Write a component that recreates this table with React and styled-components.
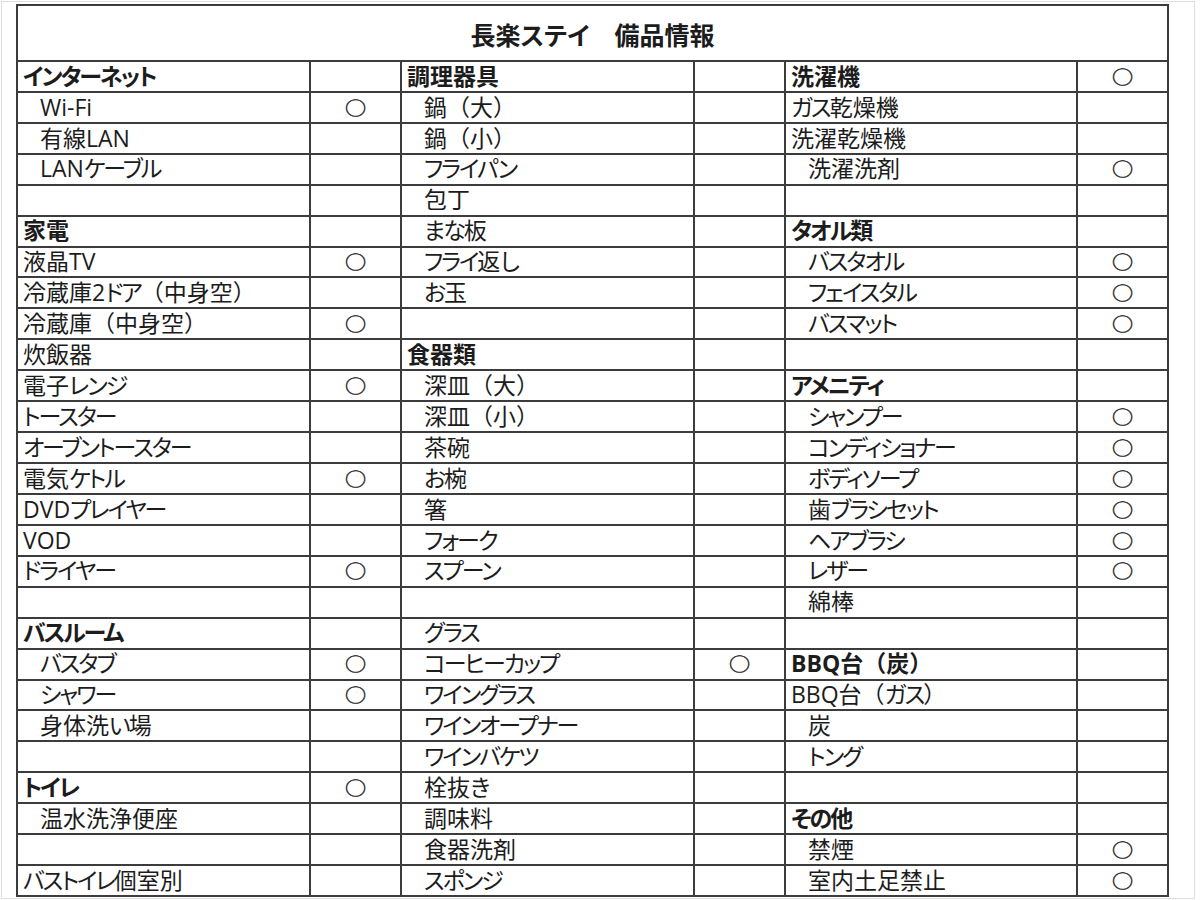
import React from 'react'
import styled, { createGlobalStyle } from 'styled-components'

const GlobalStyle = createGlobalStyle`
  html, body {
    margin: 0;
    padding: 0;
    background: #ffffff;
  }
  body {
    font-family: "Open Sans", "Noto Sans CJK JP", sans-serif;
    color: #1c1c1c;
  }
`

const Frame = styled.div`
  box-sizing: border-box;
  width: 1194px;
  height: 898px;
  margin: 1px 0 0 1px;
  border: 1px solid #dedede;
  padding: 2px 0 0 14px;
`

const Sheet = styled.div`
  display: grid;
  grid-template-columns: 291px 89px 291px 89px 290px 89px;
  grid-template-rows: 54px repeat(27, 1fr);
  gap: 2px;
  padding: 2px;
  width: 1153px;
  height: 893px;
  box-sizing: border-box;
  background: #3c3c3c;
`

const Title = styled.div`
  grid-column: 1 / -1;
  background: #fff;
  display: flex;
  align-items: center;
  justify-content: center;
  font-size: 25px;
  font-weight: 700;
  padding-top: 2px;
`

const Cell = styled.div`
  background: #fff;
  display: flex;
  align-items: center;
  min-width: 0;
  padding-left: ${p => (p.$indent ? '22px' : '5px')};
  font-size: 23px;
  font-weight: ${p => (p.$bold ? 700 : 400)};
  white-space: nowrap;
  line-height: 1.2;
`

// kana in the sheet font are narrow, so use proportional widths
const Kana = styled.span`
  font-feature-settings: "palt";
  letter-spacing: ${p => (p.$title ? '0' : '-2px')};
`

const Mark = styled.div`
  background: #fff;
  display: flex;
  align-items: center;
  justify-content: center;
  font-family: "Noto Sans CJK JP", sans-serif;
  font-size: 23px;
  line-height: 1.2;
  color: #2a2a2a;

  span {
    display: inline-block;
    transform: scale(0.92, 0.78);
    -webkit-text-stroke: 0.5px #2a2a2a;
  }
`

const Label = ({ text, title }) =>
  text.split(/([\u3040-\u30ff]+)/).map((part, i) =>
    /[\u3040-\u30ff]/.test(part) ? (
      <Kana key={i} $title={title}>
        {part}
      </Kana>
    ) : (
      part
    )
  )

// [text, type, circle]  type: b = heading, i = indented, n = plain
const columns = [
  [
    ['インターネット', 'b'],
    ['Wi-Fi', 'i', true],
    ['有線LAN', 'i'],
    ['LANケーブル', 'i'],
    ['', 'n'],
    ['家電', 'b'],
    ['液晶TV', 'n', true],
    ['冷蔵庫2ドア（中身空）', 'n'],
    ['冷蔵庫（中身空）', 'n', true],
    ['炊飯器', 'n'],
    ['電子レンジ', 'n', true],
    ['トースター', 'n'],
    ['オーブントースター', 'n'],
    ['電気ケトル', 'n', true],
    ['DVDプレイヤー', 'n'],
    ['VOD', 'n'],
    ['ドライヤー', 'n', true],
    ['', 'n'],
    ['バスルーム', 'b'],
    ['バスタブ', 'i', true],
    ['シャワー', 'i', true],
    ['身体洗い場', 'i'],
    ['', 'n'],
    ['トイレ', 'b', true],
    ['温水洗浄便座', 'i'],
    ['', 'n'],
    ['バストイレ個室別', 'n'],
  ],
  [
    ['調理器具', 'b'],
    ['鍋（大）', 'i'],
    ['鍋（小）', 'i'],
    ['フライパン', 'i'],
    ['包丁', 'i'],
    ['まな板', 'i'],
    ['フライ返し', 'i'],
    ['お玉', 'i'],
    ['', 'n'],
    ['食器類', 'b'],
    ['深皿（大）', 'i'],
    ['深皿（小）', 'i'],
    ['茶碗', 'i'],
    ['お椀', 'i'],
    ['箸', 'i'],
    ['フォーク', 'i'],
    ['スプーン', 'i'],
    ['', 'n'],
    ['グラス', 'i'],
    ['コーヒーカップ', 'i', true],
    ['ワイングラス', 'i'],
    ['ワインオープナー', 'i'],
    ['ワインバケツ', 'i'],
    ['栓抜き', 'i'],
    ['調味料', 'i'],
    ['食器洗剤', 'i'],
    ['スポンジ', 'i'],
  ],
  [
    ['洗濯機', 'b', true],
    ['ガス乾燥機', 'n'],
    ['洗濯乾燥機', 'n'],
    ['洗濯洗剤', 'i', true],
    ['', 'n'],
    ['タオル類', 'b'],
    ['バスタオル', 'i', true],
    ['フェイスタル', 'i', true],
    ['バスマット', 'i', true],
    ['', 'n'],
    ['アメニティ', 'b'],
    ['シャンプー', 'i', true],
    ['コンディショナー', 'i', true],
    ['ボディソープ', 'i', true],
    ['歯ブラシセット', 'i', true],
    ['ヘアブラシ', 'i', true],
    ['レザー', 'i', true],
    ['綿棒', 'i'],
    ['', 'n'],
    ['BBQ台（炭）', 'b'],
    ['BBQ台（ガス）', 'n'],
    ['炭', 'i'],
    ['トング', 'i'],
    ['', 'n'],
    ['その他', 'b'],
    ['禁煙', 'i', true],
    ['室内土足禁止', 'i', true],
  ],
]

const App = () => {
  const rows = columns[0].map((_, r) => columns.map(col => col[r]))

  return (
    <>
      <GlobalStyle />
      <Frame>
        <Sheet>
          <Title>
            <Label text='長楽ステイ　備品情報' title />
          </Title>
          {rows.map((row, r) =>
            row.map(([text, type, mark], c) => (
              <React.Fragment key={`${r}-${c}`}>
                <Cell $bold={type === 'b'} $indent={type === 'i'}>
                  <Label text={text} />
                </Cell>
                <Mark>{mark && <span>○</span>}</Mark>
              </React.Fragment>
            ))
          )}
        </Sheet>
      </Frame>
    </>
  )
}

export default App
